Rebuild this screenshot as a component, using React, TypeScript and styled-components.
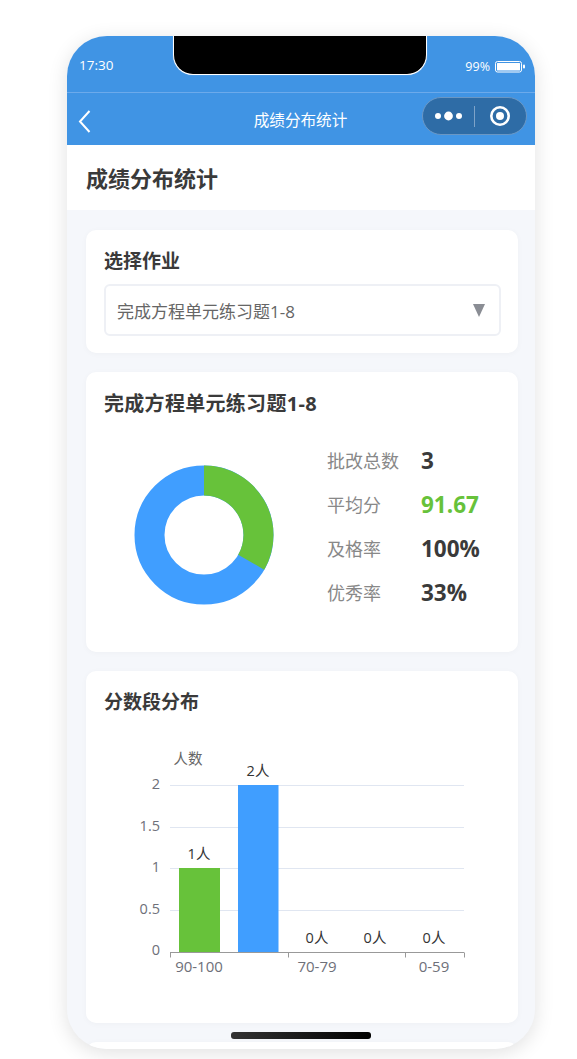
import React from "react";
import styled, { createGlobalStyle } from "styled-components";

const Global = createGlobalStyle`
  html, body { margin: 0; padding: 0; background: #fff; }
  body { font-family: "Open Sans", "Noto Sans CJK SC", sans-serif; overflow: hidden; height: 1059px; }
`;

const Stage = styled.div`
  padding: 36px 0 0 67px;
  height: 1059px;
  box-sizing: border-box;
`;

const Phone = styled.div`
  position: relative;
  width: 468px;
  height: 1013px;
  border-radius: 40px;
  overflow: hidden;
  background: #f5f7fb;
  box-shadow: 0 4px 20px rgba(0, 0, 0, 0.12);
  display: flex;
  flex-direction: column;
`;

const Notch = styled.div`
  position: absolute;
  top: -1px;
  left: 106px;
  width: 252px;
  height: 39px;
  background: #000;
  border: 1px solid #fff;
  border-top: none;
  border-radius: 0 0 20px 20px;
  box-shadow: 0 0 1px rgba(255, 255, 255, 0.6);
`;

const StatusBar = styled.div`
  height: 57px;
  flex: none;
  box-sizing: border-box;
  background: #4094e4;
  border-bottom: 1px solid #6caaeb;
  display: flex;
  justify-content: space-between;
  align-items: flex-start;
  padding: 20px 10px 0 12px;
  color: #fff;
`;

const Time = styled.span`
  font-size: 13.5px;
  line-height: 18px;
`;

const Battery = styled.div`
  display: flex;
  align-items: center;
  gap: 5px;
  font-size: 12.5px;
  line-height: 18px;
  margin-top: 2px;
`;

const NavBar = styled.div`
  position: relative;
  height: 52px;
  flex: none;
  background: #4094e4;
  display: flex;
  align-items: center;
  justify-content: center;
  color: #fff;
`;

const BackIcon = styled.svg`
  position: absolute;
  left: 11px;
  top: 16px;
`;

const NavTitle = styled.div`
  font-size: 15.6px;
  line-height: 20px;
  margin: 2px 1px 0 0;
`;

const Capsule = styled.div`
  position: absolute;
  left: 355px;
  top: 4px;
  width: 105px;
  height: 38px;
  box-sizing: border-box;
  border-radius: 19px;
  background: #2e6ca6;
  border: 1px solid #6a97c4;
`;

const Header = styled.div`
  height: 65px;
  flex: none;
  box-sizing: border-box;
  background: #fff;
  display: flex;
  align-items: center;
  padding: 0 0 1px 19px;
  font-size: 22px;
  font-weight: 700;
  color: #3a3a3a;
`;

const Content = styled.div`
  flex: 1;
  display: flex;
  flex-direction: column;
  gap: 19px;
  padding: 20px 17px 0 19px;
`;

const Card = styled.section<{ $height: number }>`
  height: ${(p) => p.$height}px;
  box-sizing: border-box;
  background: #fff;
  border-radius: 10px;
  box-shadow: 0 1px 6px rgba(0, 0, 0, 0.03);
  padding: 18px;
  flex: none;
`;

const CardTitle = styled.h2<{ $large?: boolean }>`
  margin: ${(p) => (p.$large ? "1px 0 -1px" : "0")};
  font-size: ${(p) => (p.$large ? 20 : 19)}px;
  letter-spacing: ${(p) => (p.$large ? 0.3 : 0)}px;
  line-height: 26px;
  font-weight: 700;
  color: #3a3a3a;
`;

const Select = styled.div`
  margin: 10px -1px 0 0;
  height: 52px;
  box-sizing: border-box;
  border: 2px solid #eef0f5;
  border-radius: 6px;
  display: flex;
  align-items: center;
  justify-content: space-between;
  padding: 0 14px 0 11px;
  font-size: 17px;
  color: #666;
`;

const Caret = styled.span`
  width: 0;
  height: 0;
  border-left: 6px solid transparent;
  border-right: 6px solid transparent;
  border-top: 13px solid #8a8d94;
`;

const Overview = styled.div`
  display: flex;
  margin-top: 22px;
`;

const Donut = styled.svg`
  margin: 27px 0 0 30px;
  flex: none;
`;

const Stats = styled.div`
  margin-left: 53px;
  display: grid;
  grid-template-columns: 94px auto;
  grid-auto-rows: 44px;
  align-items: center;
`;

const StatLabel = styled.span`
  font-size: 18px;
  color: #888;
`;

const StatValue = styled.span<{ $accent?: boolean }>`
  font-size: 22.5px;
  font-weight: 700;
  color: ${(p) => (p.$accent ? "#67c23a" : "#3a3a3a")};
`;

const Chart = styled.svg`
  display: block;
  margin: 0 0 0 -18px;
  font-family: "Open Sans", "Noto Sans CJK SC", sans-serif;
`;

const HomeBar = styled.div`
  position: absolute;
  left: 164px;
  bottom: 10px;
  width: 140px;
  height: 7px;
  border-radius: 3px;
  background: linear-gradient(90deg, #333, #000);
`;

const stats = [
  { label: "批改总数", value: "3" },
  { label: "平均分", value: "91.67", accent: true },
  { label: "及格率", value: "100%" },
  { label: "优秀率", value: "33%" },
];

const ox = 86;
const oy = 715;
const X = (x: number) => x - ox;
const Y = (y: number) => y - oy;

const gridLines = [
  { y: 785, t: "2" },
  { y: 827, t: "1.5" },
  { y: 868, t: "1" },
  { y: 910, t: "0.5" },
];
const ticks = [170, 288, 405, 464];
const categories: [string, number][] = [
  ["90-100", 199],
  ["70-79", 317],
  ["0-59", 434],
];
const barLabels: [string, number, number][] = [
  ["2人", 258, 776],
  ["1人", 199, 859],
  ["0人", 317, 942.5],
  ["0人", 375, 942.5],
  ["0人", 434, 942.5],
];

function ChartSvg() {
  const axisY = Y(952.5);
  return (
    <Chart width={432} height={290} viewBox="0 0 432 290">
      <text x={X(188)} y={Y(764)} textAnchor="middle" fontSize="14.5" fill="#666">人数</text>
      {gridLines.map((g) => (
        <g key={g.t}>
          <line x1={X(170)} x2={X(464)} y1={Y(g.y) + 0.5} y2={Y(g.y) + 0.5} stroke="#e0e6f1" />
          <text x={X(160)} y={Y(g.y) + 4} textAnchor="end" fontSize="14.5" fill="#6e7079">{g.t}</text>
        </g>
      ))}
      <text x={X(160)} y={axisY + 2} textAnchor="end" fontSize="14.5" fill="#6e7079">0</text>
      <rect x={X(179)} y={Y(868)} width={41} height={84.5} fill="#67c23a" />
      <rect x={X(238)} y={Y(785)} width={40.5} height={167.5} fill="#409eff" />
      <line x1={X(170)} x2={X(464)} y1={axisY} y2={axisY} stroke="#999" />
      {ticks.map((x) => (
        <line key={x} x1={X(x) + 0.5} x2={X(x) + 0.5} y1={axisY} y2={axisY + 5} stroke="#999" />
      ))}
      {categories.map(([t, x]) => (
        <text key={t} x={X(x)} y={Y(972)} textAnchor="middle" fontSize="15" fill="#6e7079">{t}</text>
      ))}
      {barLabels.map(([t, x, y]) => (
        <text key={x} x={X(x)} y={Y(y)} textAnchor="middle" fontSize="14.5" fill="#333">{t}</text>
      ))}
    </Chart>
  );
}

export default function App() {
  return (
    <>
      <Global />
      <Stage>
        <Phone>
          <StatusBar>
            <Time>17:30</Time>
            <Battery>
              99%
              <svg width="30" height="12" viewBox="0 0 30 12">
                <rect x="0.5" y="0.5" width="26" height="10.5" rx="2" fill="none" stroke="#fff" />
                <rect x="2" y="2" width="23" height="7.5" rx="0.5" fill="#fff" />
                <rect x="28" y="3.5" width="2" height="4" rx="1" fill="#fff" />
              </svg>
            </Battery>
          </StatusBar>
          <NavBar>
            <BackIcon width="14" height="24" viewBox="0 0 14 24">
              <path d="M11.5 2 L2 12.5 L11.5 23" fill="none" stroke="#fff" strokeWidth="2" />
            </BackIcon>
            <NavTitle>成绩分布统计</NavTitle>
            <Capsule>
              <svg width="103" height="36" viewBox="0 0 103 36">
                <circle cx="15" cy="18" r="3" fill="#fff" />
                <circle cx="25.5" cy="18" r="4.4" fill="#fff" />
                <circle cx="36" cy="18" r="3" fill="#fff" />
                <line x1="51.5" x2="51.5" y1="8" y2="29" stroke="#7ea3c8" />
                <circle cx="77" cy="18" r="8.7" fill="none" stroke="#fff" strokeWidth="2.6" />
                <circle cx="77" cy="18" r="4" fill="#fff" />
              </svg>
            </Capsule>
          </NavBar>
          <Header>成绩分布统计</Header>
          <Content>
            <Card $height={123}>
              <CardTitle>选择作业</CardTitle>
              <Select>
                完成方程单元练习题1-8
                <Caret />
              </Select>
            </Card>
            <Card $height={280}>
              <CardTitle $large>完成方程单元练习题1-8</CardTitle>
              <Overview>
                <Donut width="140" height="140" viewBox="-70 -70 140 140">
                  <circle r="54.5" fill="none" stroke="#409eff" strokeWidth="30" />
                  <path
                    d="M0 -69.5 A69.5 69.5 0 0 1 60.2 34.75 L34.2 19.75 A39.5 39.5 0 0 0 0 -39.5 Z"
                    fill="#67c23a"
                  />
                </Donut>
                <Stats>
                  {stats.map((s) => (
                    <React.Fragment key={s.label}>
                      <StatLabel>{s.label}</StatLabel>
                      <StatValue $accent={s.accent}>{s.value}</StatValue>
                    </React.Fragment>
                  ))}
                </Stats>
              </Overview>
            </Card>
            <Card $height={352}>
              <CardTitle>分数段分布</CardTitle>
              <ChartSvg />
            </Card>
            <Card $height={100} />
          </Content>
          <HomeBar />
          <Notch />
        </Phone>
      </Stage>
    </>
  );
}
